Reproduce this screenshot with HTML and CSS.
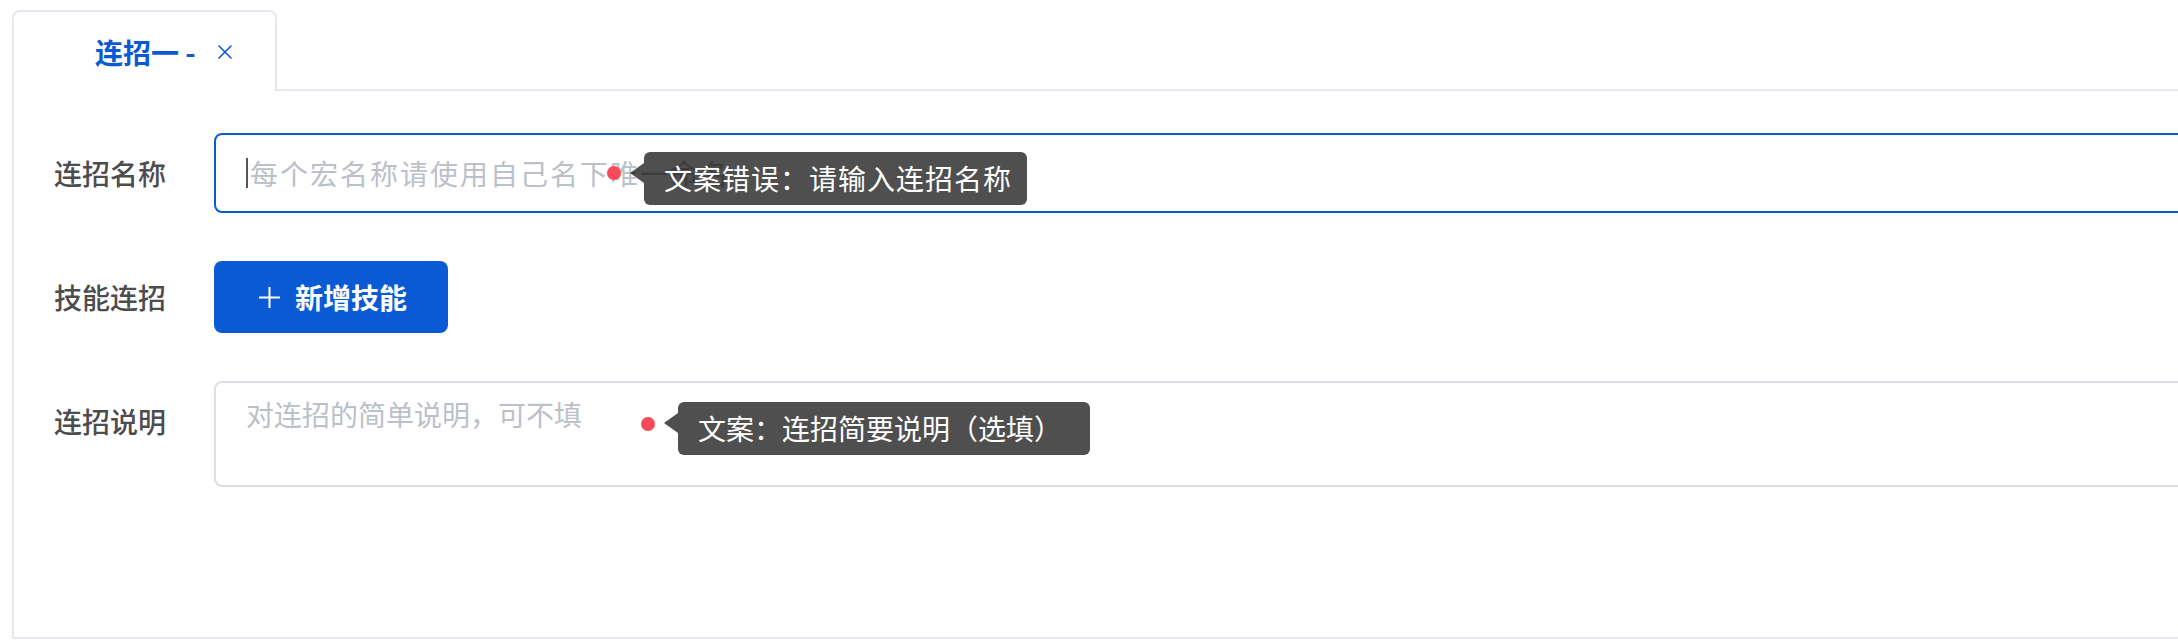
FILE: index.html
```html
<!DOCTYPE html>
<html lang="zh-CN">
<head>
<meta charset="utf-8">
<title>连招编辑</title>
<link rel="stylesheet" href="styles.css">
</head>
<body>
<div class="page">
  <div class="tabs">
    <div class="tabs-header">
      <div class="tab tab-active">
        <span class="tab-label">连招一 -</span>
        <svg class="tab-close" viewBox="0 0 14 14" width="14" height="14" aria-hidden="true">
          <path d="M1 1 L13 13 M13 1 L1 13" fill="none" stroke="currentColor" stroke-width="1.6" stroke-linecap="round"/>
        </svg>
      </div>
      <div class="tabs-rest"></div>
    </div>
    <div class="tabs-body">
      <div class="form">
        <div class="form-item">
          <div class="form-label">连招名称</div>
          <div class="form-content">
            <div class="input input-focus">
              <span class="caret"></span>
              <span class="placeholder placeholder-wide">每个宏名称请使用自己名下唯一命名</span>
            </div>
          </div>
        </div>
        <div class="form-item">
          <div class="form-label">技能连招</div>
          <div class="form-content">
            <button class="btn-primary" type="button">
              <svg class="btn-plus" viewBox="0 0 21 21" width="21" height="21" aria-hidden="true">
                <path d="M10.5 0 V21 M0 10.5 H21" fill="none" stroke="currentColor" stroke-width="2"/>
              </svg>
              <span>新增技能</span>
            </button>
          </div>
        </div>
        <div class="form-item">
          <div class="form-label">连招说明</div>
          <div class="form-content">
            <div class="textarea">
              <span class="placeholder">对连招的简单说明，可不填</span>
            </div>
          </div>
        </div>
      </div>
    </div>
  </div>

  <div class="note note-name">
    <span class="note-dot"></span>
    <div class="note-tip note-tip-name">文案错误：请输入连招名称</div>
  </div>
  <div class="note note-desc">
    <span class="note-dot note-dot-desc"></span>
    <div class="note-tip note-tip-desc">文案：连招简要说明（选填）</div>
  </div>
</div>
</body>
</html>
```

FILE: styles.css
```css
html, body {
  margin: 0;
  padding: 0;
  background: #ffffff;
  overflow: hidden;
}

body {
  font-family: "Noto Sans CJK SC", "Noto Sans", "Liberation Sans", sans-serif;
  font-size: 28px;
  font-weight: 400;
  color: #4d4d4d;
}

.page {
  position: relative;
  padding: 10px 0 0 12px;
  width: 2400px;
  height: 644px;
  box-sizing: border-box;
}

.tabs {
  width: 2360px;
}

.tabs-header {
  display: flex;
  align-items: stretch;
  height: 81px;
}

.tab {
  box-sizing: border-box;
  width: 265px;
  height: 81px;
  border: 2px solid #e4e7ed;
  border-bottom: 0;
  border-radius: 8px 8px 0 0;
  padding-left: 81px;
  display: flex;
  align-items: center;
  background: #ffffff;
}

.tab-active {
  color: #0a5bd3;
}

.tab-label {
  display: inline-block;
  width: 123px;
  font-weight: 700;
  font-size: 28px;
  line-height: 40px;
  white-space: pre;
}

.tab-close {
  display: block;
  color: #0a5bd3;
}

.tabs-rest {
  flex: 1;
  border-bottom: 2px solid #e4e7ed;
}

.tabs-body {
  box-sizing: border-box;
  height: 548px;
  border: 2px solid #e4e7ed;
  border-top: 0;
  padding: 42px 0 0 40px;
}

.form-item {
  display: flex;
  align-items: flex-start;
  margin-bottom: 44px;
}

.form-label {
  width: 160px;
  flex: none;
  line-height: 80px;
  font-size: 28px;
  font-weight: 500;
  color: #4d4d4d;
}

.form-content {
  flex: 1;
  min-height: 80px;
  display: flex;
  align-items: center;
}

.input {
  box-sizing: border-box;
  flex: 1;
  height: 80px;
  border: 2px solid #dcdfe6;
  border-radius: 8px;
  padding: 0 30px;
  display: flex;
  align-items: center;
}

.input-focus {
  border-color: #0a5bd3;
}

.caret {
  display: block;
  width: 2px;
  height: 30px;
  background: #555555;
  margin-right: 2px;
  flex: none;
}

.placeholder {
  color: #bcc0c8;
  font-size: 28px;
  white-space: nowrap;
}

.placeholder-wide {
  letter-spacing: 2px;
}

.btn-primary {
  box-sizing: border-box;
  height: 72px;
  margin-top: 4px;
  margin-bottom: 4px;
  border: 0;
  border-radius: 8px;
  background: #0a5bd3;
  color: #ffffff;
  padding: 0 41px 0 45px;
  display: flex;
  align-items: center;
  gap: 15px;
  font-family: "Noto Sans CJK SC", "Noto Sans", sans-serif;
  font-size: 28px;
  font-weight: 700;
  line-height: 1;
}

.btn-plus {
  display: block;
  color: #ffffff;
}

.textarea {
  box-sizing: border-box;
  flex: 1;
  height: 106px;
  border: 2px solid #dcdfe6;
  border-radius: 8px;
  padding: 10px 30px;
  line-height: 42px;
  align-self: flex-start;
}

/* annotation overlays */
.note {
  position: absolute;
  display: flex;
  align-items: flex-start;
}

.note-name {
  left: 607px;
  top: 152px;
}

.note-desc {
  left: 641px;
  top: 402px;
}

.note-dot {
  display: block;
  width: 14px;
  height: 14px;
  border-radius: 50%;
  background: #f84a5b;
  margin-top: 14px;
  margin-right: 23px;
  flex: none;
}

.note-dot-desc {
  margin-top: 15px;
}

.note-tip {
  position: relative;
  box-sizing: border-box;
  height: 53px;
  line-height: 53px;
  padding-left: 20px;
  border-radius: 6px;
  background: rgba(0, 0, 0, 0.69);
  color: #ffffff;
  font-size: 28px;
  font-weight: 400;
  white-space: nowrap;
}

.note-tip::before {
  content: "";
  position: absolute;
  left: -14px;
  top: 11px;
  width: 0;
  height: 0;
  border-top: 10px solid transparent;
  border-bottom: 10px solid transparent;
  border-right: 14px solid rgba(0, 0, 0, 0.69);
}

.note-tip-name {
  width: 383px;
  letter-spacing: 1px;
}

.note-tip-desc {
  width: 412px;
}
```
